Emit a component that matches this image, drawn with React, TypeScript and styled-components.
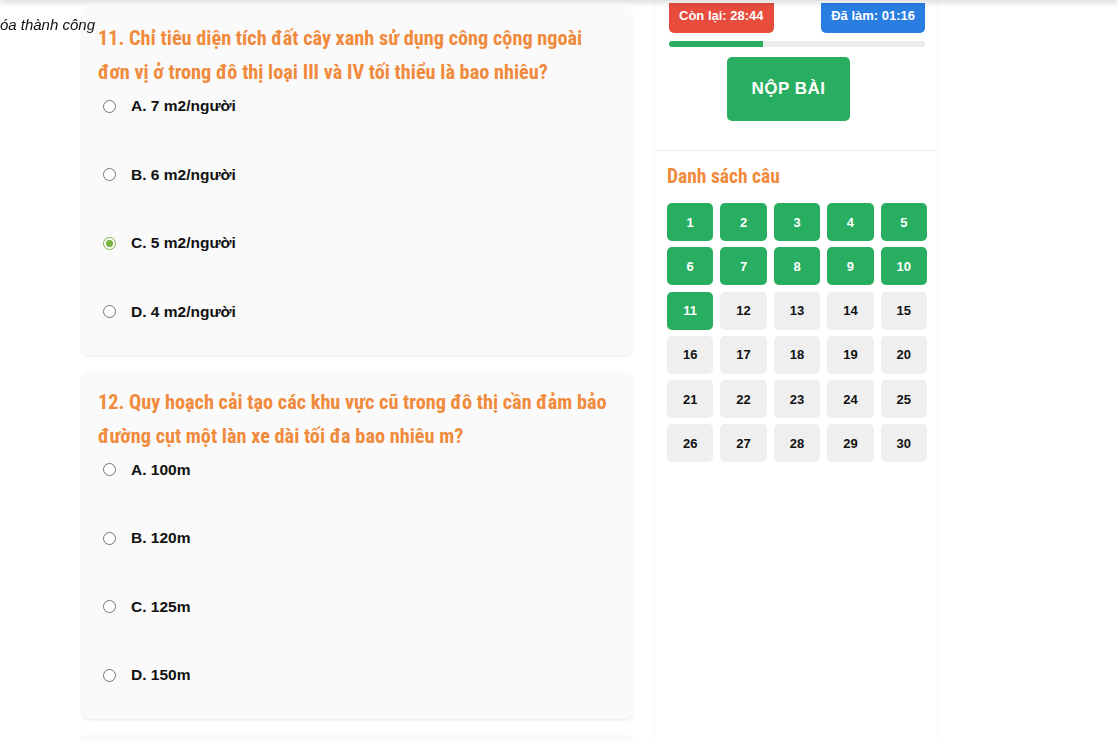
import React from 'react';
import styled, { createGlobalStyle } from 'styled-components';

const GlobalStyle = createGlobalStyle`
  html, body {
    margin: 0;
    padding: 0;
    background: #fff;
    font-family: "Liberation Sans", Arial, sans-serif;
    overflow: hidden;
  }
`;

const HeaderShadow = styled.div`
  position: fixed;
  top: -40px;
  left: 0;
  right: 0;
  height: 40px;
  background: #fff;
  box-shadow: 0 2px 7px rgba(0, 0, 0, 0.16);
  z-index: 5;
`;

const Toast = styled.div`
  position: fixed;
  top: 16px;
  left: 0;
  width: 95px;
  display: flex;
  justify-content: flex-end;
  z-index: 6;
  font-style: italic;
  font-size: 15px;
  color: #111;
  white-space: nowrap;
`;

const Page = styled.div`
  display: flex;
  align-items: stretch;
  gap: 23px;
  padding-left: 82px;
  min-height: 100vh;
`;

const Questions = styled.div`
  width: 550px;
  padding-top: 8px;
  display: flex;
  flex-direction: column;
  gap: 16.5px;
`;

const Card = styled.div`
  background: #fafafa;
  border-radius: 6px;
  box-shadow: 0 1px 3px rgba(0, 0, 0, 0.09);
  padding: 13px 16px 26.5px;
`;

const Title = styled.div`
  font-family: "Roboto Condensed", "DejaVu Sans Condensed", sans-serif;
  font-weight: 700;
  font-size: 20.3px;
  line-height: 34px;
  color: #f08a3c;
`;

const Option = styled.label<{ last?: boolean }>`
  display: flex;
  align-items: center;
  height: 34px;
  margin-bottom: ${(p) => (p.last ? '0' : '34.5px')};
  font-weight: 700;
  font-size: 15.5px;
  color: #111;
`;

const Radio = styled.input`
  appearance: none;
  box-sizing: border-box;
  width: 13px;
  height: 13px;
  margin: 0 15px 0 5px;
  border: 1px solid #767676;
  border-radius: 50%;
  background: #fff;

  &:checked {
    border: 1.5px solid #7cb342;
    background: radial-gradient(circle, #7cb342 0 3.4px, #fff 3.8px);
  }
`;

const Sidebar = styled.div`
  width: 282px;
  background: #fff;
  box-shadow: 0 0 4px rgba(0, 0, 0, 0.05);
`;

const TopBlock = styled.div`
  padding: 3px 12px 29px 14px;
  border-bottom: 1px solid #ececec;
`;

const Timers = styled.div`
  display: flex;
  justify-content: space-between;
`;

const Badge = styled.div<{ color: string }>`
  background: ${(p) => p.color};
  color: #fff;
  font-weight: 700;
  font-size: 13px;
  height: 30px;
  line-height: 26px;
  padding: 0 10px;
  border-radius: 0 0 5px 5px;
`;

const Progress = styled.div`
  margin-top: 8px;
  height: 6px;
  border-radius: 3px;
  background: #ececec;
  overflow: hidden;
`;

const Fill = styled.div`
  height: 100%;
  background: #27ae60;
`;

const SubmitRow = styled.div`
  display: flex;
  justify-content: center;
  padding-right: 17px;
  margin-top: 10px;
`;

const Submit = styled.button`
  width: 123px;
  height: 64px;
  border: none;
  border-radius: 5px;
  background: #27ae60;
  color: #fff;
  font-family: "Liberation Sans", Arial, sans-serif;
  font-weight: 700;
  font-size: 17px;
  letter-spacing: 0.5px;
`;

const ListBlock = styled.div`
  padding: 13px 10px 0 12px;
`;

const ListTitle = styled.div`
  font-family: "Roboto Condensed", "DejaVu Sans Condensed", sans-serif;
  font-weight: 700;
  font-size: 19.5px;
  line-height: 26px;
  color: #f08a3c;
  margin-bottom: 13px;
`;

const Grid = styled.div`
  display: grid;
  grid-template-columns: repeat(5, 1fr);
  column-gap: 7px;
  row-gap: 6.3px;
`;

const Cell = styled.div<{ done?: boolean }>`
  height: 38px;
  border-radius: 5px;
  display: flex;
  align-items: center;
  justify-content: center;
  font-weight: 700;
  font-size: 13px;
  background: ${(p) => (p.done ? '#27ae60' : '#efefef')};
  color: ${(p) => (p.done ? '#fff' : '#111')};
`;

const QUESTIONS = [
  {
    title: '11. Chỉ tiêu diện tích đất cây xanh sử dụng công cộng ngoài đơn vị ở trong đô thị loại III và IV tối thiểu là bao nhiêu?',
    options: ['A. 7 m2/người', 'B. 6 m2/người', 'C. 5 m2/người', 'D. 4 m2/người'],
    picked: 2,
  },
  {
    title: '12. Quy hoạch cải tạo các khu vực cũ trong đô thị cần đảm bảo đường cụt một làn xe dài tối đa bao nhiêu m?',
    options: ['A. 100m', 'B. 120m', 'C. 125m', 'D. 150m'],
    picked: -1,
  },
  {
    title: '13. Khoảng cách tối thiểu giữa các công trình',
    options: ['A. 4m', 'B. 6m', 'C. 8m', 'D. 10m'],
    picked: -1,
  },
];

const App = () => {
  const answered = 11;
  const total = 30;

  return (
    <>
      <GlobalStyle />
      <HeaderShadow />
      <Toast>Xóa thành công</Toast>
      <Page>
        <Questions>
          {QUESTIONS.map((q, qi) => (
            <Card key={qi}>
              <Title>{q.title}</Title>
              {q.options.map((o, oi) => (
                <Option key={oi} last={oi === q.options.length - 1}>
                  <Radio type="radio" name={`q${qi}`} defaultChecked={oi === q.picked} />
                  {o}
                </Option>
              ))}
            </Card>
          ))}
        </Questions>
        <Sidebar>
          <TopBlock>
            <Timers>
              <Badge color="#e74c3c">Còn lại: 28:44</Badge>
              <Badge color="#2a7de1">Đã làm: 01:16</Badge>
            </Timers>
            <Progress>
              <Fill style={{ width: `${(answered / total) * 100}%` }} />
            </Progress>
            <SubmitRow>
              <Submit>NỘP BÀI</Submit>
            </SubmitRow>
          </TopBlock>
          <ListBlock>
            <ListTitle>Danh sách câu</ListTitle>
            <Grid>
              {Array.from({ length: total }, (_, i) => (
                <Cell key={i} done={i < answered}>{i + 1}</Cell>
              ))}
            </Grid>
          </ListBlock>
        </Sidebar>
      </Page>
    </>
  );
};

export default App;
